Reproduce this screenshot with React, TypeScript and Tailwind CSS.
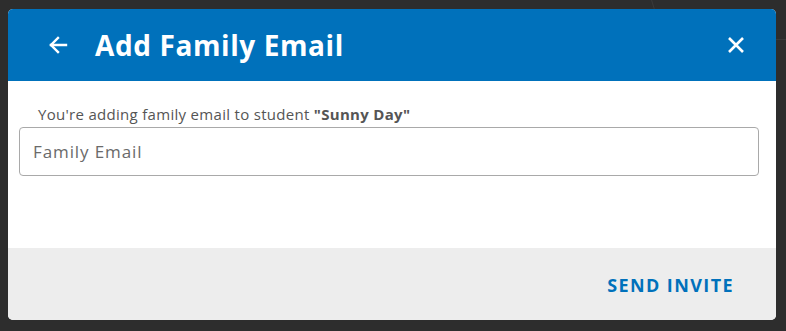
import React from "react";

export default function App() {
  return (
    <div className="w-[786px] h-[331px] bg-[#2d2d2d] pt-[9px] pl-[8px] overflow-hidden relative" style={{ fontFamily: '"Open Sans", sans-serif' }}>
      <div className="absolute left-[650px] -top-[60px] w-[200px] h-[100px] rounded-full border border-[#3a3a3a]" />
      <div className="w-[768px] h-[311px] rounded-[5px] overflow-hidden bg-white flex flex-col relative">
        <div className="h-[72px] bg-[#0071bb] flex items-center pl-[40px] pr-[31px] shrink-0">
          <svg width="20" height="20" viewBox="0 0 20 20" fill="none" stroke="white" strokeWidth="2.4" strokeLinecap="square">
            <path d="M18 10H3" />
            <path d="M10 3L3 10L10 17" />
          </svg>
          <div className="ml-[27px] text-white font-bold text-[28px] leading-none tracking-[0.6px]">Add Family Email</div>
          <div className="flex-1" />
          <svg width="18" height="18" viewBox="0 0 18 18" fill="none" stroke="white" strokeWidth="2.6">
            <path d="M2 2L16 16M16 2L2 16" />
          </svg>
        </div>
        <div className="flex-1 pl-[11px] pr-[17px] pt-[24px]">
          <div className="pl-[19px] text-[15px] leading-[19px] tracking-[0.3px] text-[#555]">
            You're adding family email to student <span className="font-bold">"Sunny Day"</span>
          </div>
          <div className="mt-[3px] h-[49px] border border-[#a9a9a9] rounded-[4px] flex items-center pl-[13px] text-[17px] tracking-[0.9px] text-[#6a6a6a]">
            Family Email
          </div>
        </div>
        <div className="h-[72px] bg-[#ededed] flex items-center justify-end pr-[42px] shrink-0">
          <div className="text-[#0071bb] font-bold text-[18px] tracking-[1.4px] pt-[2px]">SEND INVITE</div>
        </div>
      </div>
    </div>
  );
}
